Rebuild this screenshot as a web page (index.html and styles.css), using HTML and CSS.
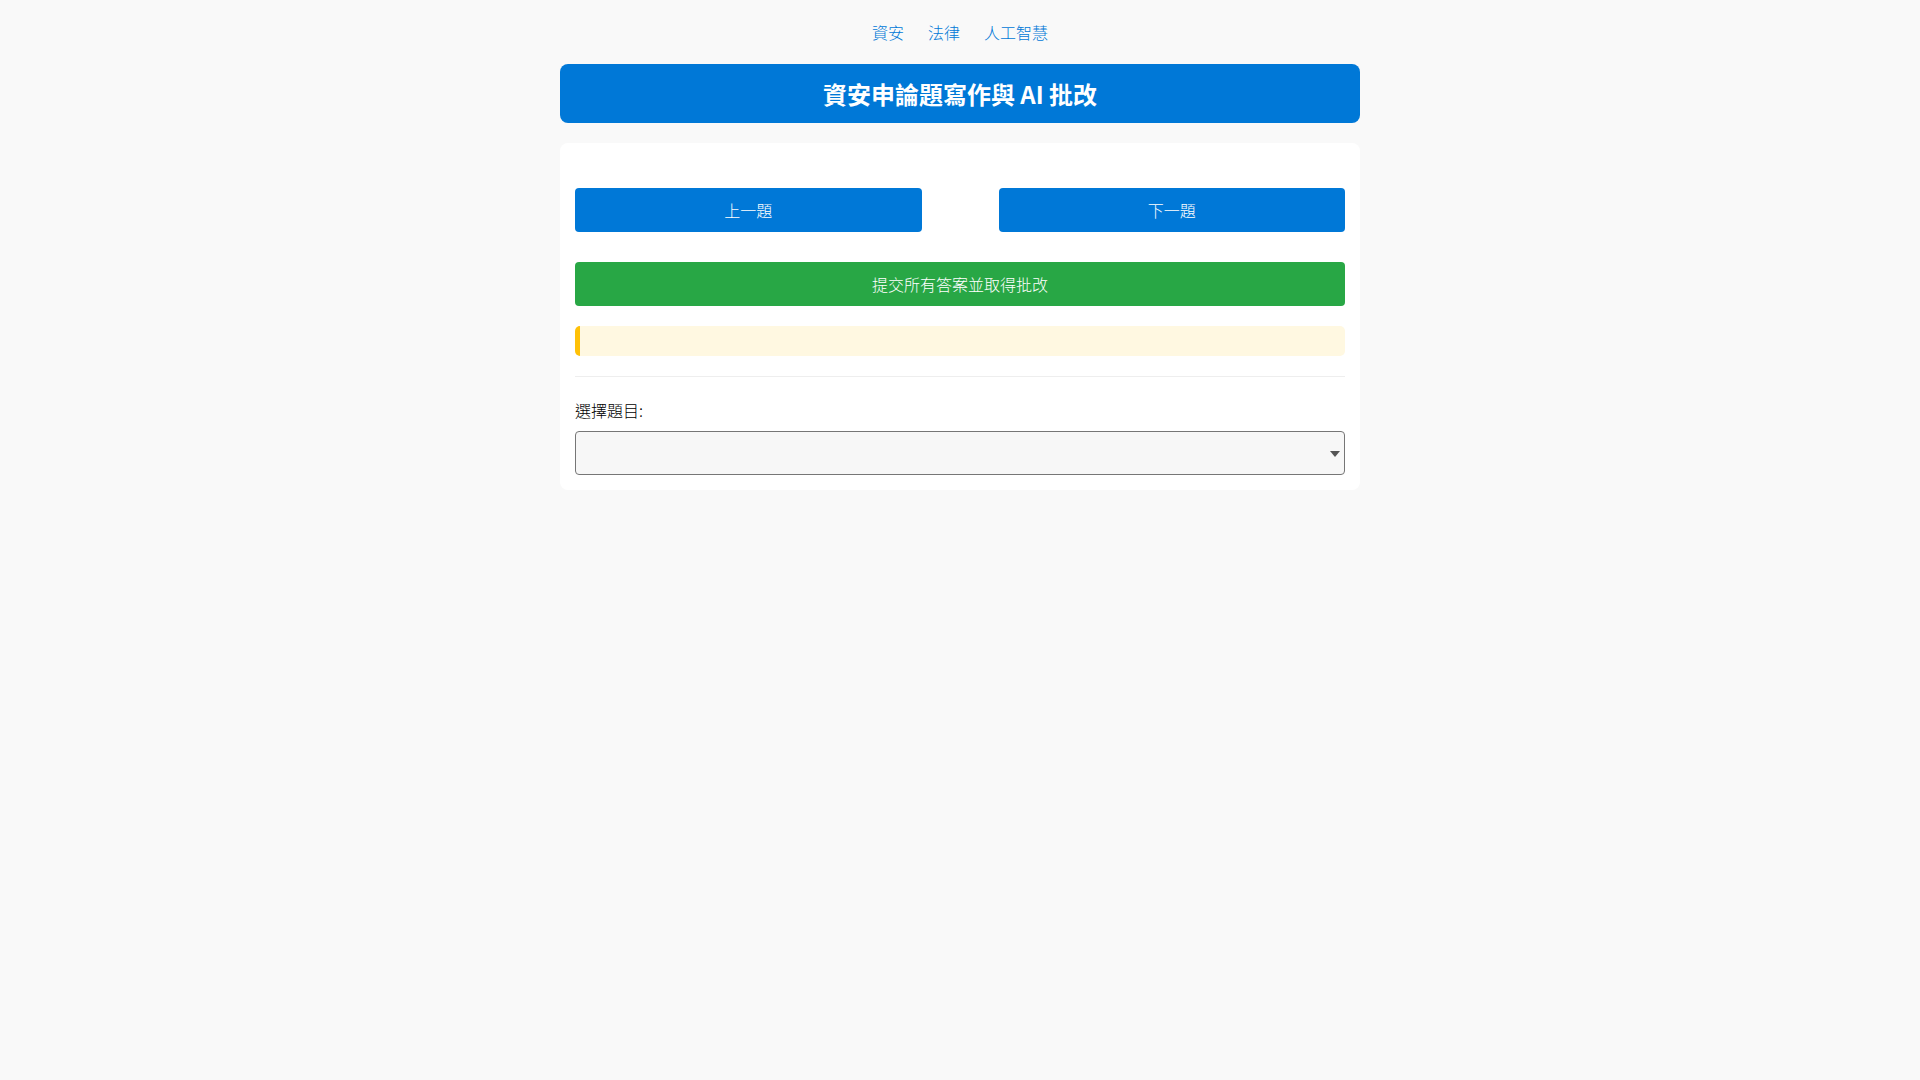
FILE: index.html
```html
<!DOCTYPE html>
<html lang="zh-Hant">
<head>
<meta charset="utf-8">
<title>資安申論題寫作與 AI 批改</title>
<link rel="stylesheet" href="styles.css">
</head>
<body>
<nav class="top-nav">
  <a href="#" class="nav-link">資安</a>
  <a href="#" class="nav-link">法律</a>
  <a href="#" class="nav-link">人工智慧</a>
</nav>
<main class="container">
  <h1 class="title">資安申論題寫作與 AI 批改</h1>
  <section class="card">
    <div class="nav-buttons">
      <button class="btn btn-blue">上一題</button>
      <button class="btn btn-blue">下一題</button>
    </div>
    <button class="btn btn-green">提交所有答案並取得批改</button>
    <div class="notice"></div>
    <hr class="divider">
    <label class="field-label" for="q">選擇題目:</label>
    <div class="select-wrap">
      <select id="q" class="select"></select>
    </div>
  </section>
</main>
</body>
</html>
```

FILE: styles.css
```css
* { box-sizing: border-box; }
html, body { margin: 0; padding: 0; }
body {
  background: #f9f9f9;
  font-family: "Noto Sans CJK TC", "Noto Sans", sans-serif;
  font-weight: 300;
  color: #000;
}
.top-nav {
  display: flex;
  justify-content: center;
  gap: 24px;
  padding-top: 20px;
  height: 45px;
}
.nav-link {
  color: #0078d7;
  text-decoration: none;
  font-size: 16px;
  line-height: 24px;
}
.container {
  width: 800px;
  margin: 19px auto 0;
}
.title {
  margin: 0;
  background: #0078d7;
  color: #fff;
  font-size: 24px;
  font-weight: 700;
  line-height: 35px;
  padding: 12px;
  height: 59px;
  text-align: center;
  border-radius: 8px;
}
.card {
  margin-top: 20px;
  background: #fff;
  border-radius: 8px;
  padding: 45px 15px 15px;
  display: flex;
  flex-direction: column;
}
.nav-buttons {
  display: flex;
  justify-content: space-between;
}
.btn {
  border: none;
  border-radius: 4px;
  color: #fff;
  font-family: inherit;
  font-weight: 300;
  font-size: 16px;
  height: 44px;
  padding: 0;
  cursor: pointer;
}
.btn-blue {
  background: #0078d7;
  width: 45%;
}
.btn-green {
  background: #28a745;
  width: 100%;
  margin-top: 30px;
}
.notice {
  margin-top: 20px;
  height: 30px;
  background: #fff8e1;
  border-left: 5px solid #ffc107;
  border-radius: 5px;
}
.divider {
  margin: 20px 0 0;
  border: none;
  border-top: 1px solid #eeeeee;
  height: 0;
}
.field-label {
  display: block;
  margin-top: 21px;
  font-size: 16px;
  line-height: 24px;
  color: #000;
}
.select-wrap {
  position: relative;
  margin-top: 9px;
}
.select-wrap::after {
  content: "";
  position: absolute;
  right: 5px;
  top: 20px;
  width: 0;
  height: 0;
  border-left: 5px solid transparent;
  border-right: 5px solid transparent;
  border-top: 6px solid #555;
  pointer-events: none;
}
.select {
  display: block;
  width: 100%;
  height: 44px;
  font-size: 16px;
  font-family: inherit;
  background-color: #f7f7f7;
  border: 1px solid #767676;
  border-radius: 4px;
  -webkit-appearance: none;
  appearance: none;
}
```
